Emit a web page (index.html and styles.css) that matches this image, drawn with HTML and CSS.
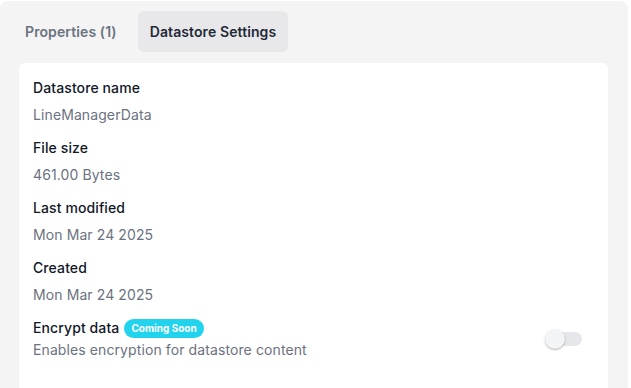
FILE: index.html
```html
<!DOCTYPE html>
<html lang="en">
<head>
  <meta charset="UTF-8">
  <meta name="viewport" content="width=device-width, initial-scale=1.0">
  <title>Datastore Settings</title>
  <link rel="stylesheet" href="styles.css">
</head>
<body>
  <div class="panel">
    <nav class="tabs">
      <a class="tab">Properties (1)</a>
      <a class="tab active">Datastore Settings</a>
    </nav>

    <section class="card">
      <div class="field">
        <div class="label">Datastore name</div>
        <div class="value">LineManagerData</div>
      </div>
      <div class="field">
        <div class="label">File size</div>
        <div class="value">461.00 Bytes</div>
      </div>
      <div class="field">
        <div class="label">Last modified</div>
        <div class="value">Mon Mar 24 2025</div>
      </div>
      <div class="field">
        <div class="label">Created</div>
        <div class="value">Mon Mar 24 2025</div>
      </div>

      <div class="setting">
        <div>
          <div class="label">Encrypt data <span class="badge">Coming Soon</span></div>
          <div class="hint">Enables encryption for datastore content</div>
        </div>
        <span class="switch"><span class="knob"></span></span>
      </div>
    </section>
  </div>
</body>
</html>
```

FILE: styles.css
```css
body {
  margin: 0;
  font-family: Inter, "Noto Sans", sans-serif;
  letter-spacing: 0.1px;
  background: #ffffff;
}
.panel {
  margin-top: 1px;
  width: 628px;
  height: 387px;
  box-sizing: border-box;
  background: #f4f4f4;
  border-radius: 8px 8px 0 0;
  padding: 10px 20px 0 19px;
  display: flex;
  flex-direction: column;
}
.tabs {
  display: flex;
  gap: 9px;
  margin-left: -6px;
}
.tab {
  font-size: 14px;
  font-weight: 600;
  color: #6b7280;
  padding: 0 12px;
  height: 41px;
  line-height: 41px;
  border-radius: 6px;
  cursor: pointer;
}
.tab.active {
  background: #e8e8ea;
  color: #1f2937;
}
.card {
  margin-top: 11px;
  flex: 1;
  background: #ffffff;
  border-radius: 6px 6px 0 0;
  padding: 15px 26px 0 14px;
}
.field {
  margin-bottom: 13px;
}
.label {
  font-size: 14px;
  font-weight: 500;
  line-height: 20px;
  color: #111827;
  display: flex;
  align-items: center;
  gap: 5px;
}
.value {
  margin-top: 7px;
  font-size: 14px;
  line-height: 20px;
  color: #6b7280;
}
.setting {
  display: flex;
  align-items: center;
  justify-content: space-between;
}
.hint {
  margin-top: 2px;
  font-size: 14px;
  line-height: 20px;
  color: #6b7280;
}
.badge {
  background: #22d3ee;
  color: #ffffff;
  font-size: 10px;
  font-weight: 700;
  letter-spacing: 0;
  height: 19px;
  line-height: 19px;
  padding: 0 7px;
  border-radius: 10px;
}
.switch {
  position: relative;
  width: 32px;
  height: 14px;
  border-radius: 7px;
  background: #e5e7eb;
}
.knob {
  position: absolute;
  left: -5px;
  top: -3px;
  width: 20px;
  height: 20px;
  border-radius: 50%;
  background: #f3f4f6;
  box-shadow: 0 1px 2px rgba(0, 0, 0, 0.3);
}
```
